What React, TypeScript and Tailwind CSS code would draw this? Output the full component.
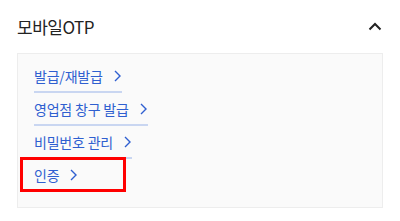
const links = ["발급/재발급", "영업점 창구 발급", "비밀번호 관리", "인증"];

function ChevronRight() {
  return (
    <svg width="7" height="12" viewBox="0 0 7 12" fill="none" className="ml-[11px] mr-px">
      <polyline points="1,1 6,6 1,11" stroke="#2f5fd0" strokeWidth="1.4" />
    </svg>
  );
}

export default function App() {
  return (
    <div
      className="w-[400px] h-[221px] bg-white"
      style={{ fontFamily: '"Noto Sans CJK KR", "Noto Sans", sans-serif' }}
    >
      <div className="flex items-center justify-between h-[53px] pl-[17px] pr-[18px]">
        <h2 className="text-[17px] text-[#222] tracking-[-0.5px]">모바일OTP</h2>
        <svg width="14" height="9" viewBox="0 0 14 9" fill="none">
          <polyline points="1.5,7.5 7,2 12.5,7.5" stroke="#222" strokeWidth="2" />
        </svg>
      </div>
      <div className="mx-[17px] h-[155px] border border-[#ededed] bg-[#fafafa] pl-[16px] pt-[12px] flex flex-col gap-[6px]">
        {links.map((label, i) => (
          <div key={label} className="relative h-[27px]">
            <a className="flex w-fit items-center h-[27px] pb-[5px] border-b-2 border-[#c9d6f1] text-[14px] leading-[20px] text-[#2f5fd0] tracking-[-0.2px]">
              {label}
              <ChevronRight />
            </a>
            {i === 3 && (
              <div className="absolute left-[-14px] top-[-8px] w-[106px] h-[35px] border-[3px] border-[#f00]" />
            )}
          </div>
        ))}
      </div>
    </div>
  );
}
